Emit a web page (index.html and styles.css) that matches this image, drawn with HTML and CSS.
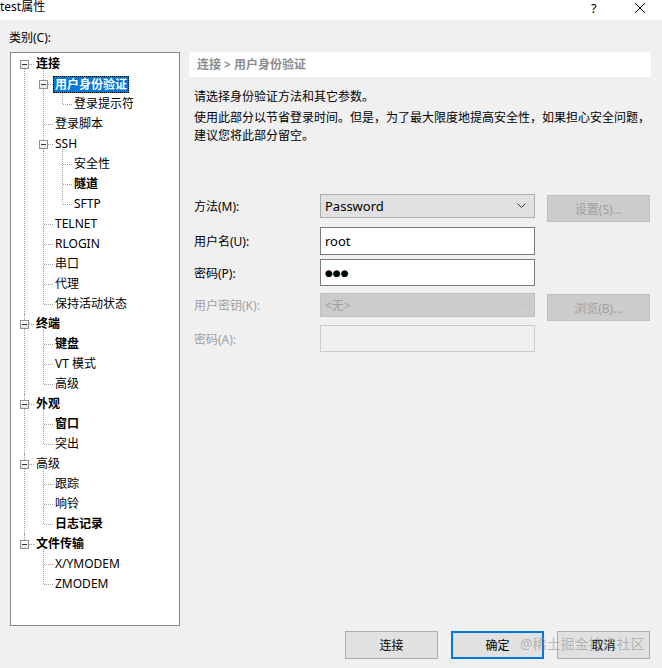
FILE: index.html
```html
<!DOCTYPE html>
<html lang="zh-CN">
<head>
<meta charset="utf-8">
<title>test属性</title>
<link rel="stylesheet" href="styles.css">
</head>
<body>
<div class="window">
  <div class="titlebar">
    <span class="title">test属性</span>
    <span class="tb-help">?</span>
    <span class="tb-close"><svg width="12" height="12" viewBox="0 0 12 12"><path d="M1 1 L11 11 M11 1 L1 11" stroke="#000" stroke-width="1" fill="none"/></svg></span>
  </div>
  <div class="content">
    <div class="cat-label">类别(C):</div>
    <div class="main">
      <div class="tree">
        <ul class="root">
          <li class="open"><div class="row"><i class="exp"></i><span class="lbl b">连接</span></div>
            <ul>
              <li class="open"><div class="row"><i class="exp"></i><span class="lbl b sel">用户身份验证</span></div>
                <ul><li><div class="row"><span class="lbl">登录提示符</span></div></li></ul>
              </li>
              <li><div class="row"><span class="lbl">登录脚本</span></div></li>
              <li class="open"><div class="row"><i class="exp"></i><span class="lbl">SSH</span></div>
                <ul>
                  <li><div class="row"><span class="lbl">安全性</span></div></li>
                  <li><div class="row"><span class="lbl b">隧道</span></div></li>
                  <li><div class="row"><span class="lbl">SFTP</span></div></li>
                </ul>
              </li>
              <li><div class="row"><span class="lbl">TELNET</span></div></li>
              <li><div class="row"><span class="lbl">RLOGIN</span></div></li>
              <li><div class="row"><span class="lbl">串口</span></div></li>
              <li><div class="row"><span class="lbl">代理</span></div></li>
              <li><div class="row"><span class="lbl">保持活动状态</span></div></li>
            </ul>
          </li>
          <li class="open"><div class="row"><i class="exp"></i><span class="lbl b">终端</span></div>
            <ul>
              <li><div class="row"><span class="lbl b">键盘</span></div></li>
              <li><div class="row"><span class="lbl">VT 模式</span></div></li>
              <li><div class="row"><span class="lbl">高级</span></div></li>
            </ul>
          </li>
          <li class="open"><div class="row"><i class="exp"></i><span class="lbl b">外观</span></div>
            <ul>
              <li><div class="row"><span class="lbl b">窗口</span></div></li>
              <li><div class="row"><span class="lbl">突出</span></div></li>
            </ul>
          </li>
          <li class="open"><div class="row"><i class="exp"></i><span class="lbl">高级</span></div>
            <ul>
              <li><div class="row"><span class="lbl">跟踪</span></div></li>
              <li><div class="row"><span class="lbl">响铃</span></div></li>
              <li><div class="row"><span class="lbl b">日志记录</span></div></li>
            </ul>
          </li>
          <li class="open"><div class="row"><i class="exp"></i><span class="lbl b">文件传输</span></div>
            <ul>
              <li><div class="row"><span class="lbl">X/YMODEM</span></div></li>
              <li><div class="row"><span class="lbl">ZMODEM</span></div></li>
            </ul>
          </li>
        </ul>
      </div>
      <div class="panel">
        <div class="crumb">连接 &gt; 用户身份验证</div>
        <p class="desc1">请选择身份验证方法和其它参数。</p>
        <p class="desc2">使用此部分以节省登录时间。但是，为了最大限度地提高安全性，如果担心安全问题，<br>建议您将此部分留空。</p>
        <div class="form">
          <div class="flabel h24">方法(M):</div>
          <div class="select h24"><span>Password</span><svg width="9" height="6" viewBox="0 0 9 6"><path d="M0.5 0.5 L4.5 4.5 L8.5 0.5" stroke="#333" fill="none"/></svg></div>
          <div class="btn disabled">设置(S)...</div>

          <div class="flabel h28">用户名(U):</div>
          <div class="input h28">root</div>
          <div></div>

          <div class="flabel h27">密码(P):</div>
          <div class="input h27"><span class="dots">●●●</span></div>
          <div></div>

          <div class="flabel h24 dis">用户密钥(K):</div>
          <div class="select h24 disabled"><span>&lt;无&gt;</span><svg width="9" height="6" viewBox="0 0 9 6"><path d="M0.5 0.5 L4.5 4.5 L8.5 0.5" stroke="#bdbdbd" fill="none"/></svg></div>
          <div class="btn disabled">浏览(B)...</div>

          <div class="flabel h27 dis">密码(A):</div>
          <div class="input h27 disabled"></div>
          <div></div>
        </div>
      </div>
    </div>
    <div class="footer">
      <div class="btn big">连接</div>
      <div class="btn big focus">确定</div>
      <div class="btn big">取消</div>
      <span class="watermark">@稀土掘金技术社区</span>
    </div>
  </div>
</div>
</body>
</html>
```

FILE: styles.css
```css
* { box-sizing: border-box; }
html, body { margin: 0; padding: 0; }
body {
  width: 662px;
  height: 668px;
  background: #f0f0f0;
  font-family: "Segoe UI", "Noto Sans", "Noto Sans CJK SC", sans-serif;
  font-size: 12px;
  color: #000;
  overflow: hidden;
}
.window { width: 662px; height: 668px; }

.titlebar {
  height: 20px;
  background: #fff;
  position: relative;
}
.title { position: absolute; left: 0; top: -1px; font-size: 12px; line-height: 16px; }
.tb-help { position: absolute; left: 591px; top: 0; font-size: 13px; line-height: 16px; }
.tb-close { position: absolute; left: 634px; top: 2px; width: 12px; height: 12px; }
.tb-close svg { display: block; }

.content { position: relative; }
.cat-label { margin: 10px 0 0 9px; height: 16px; line-height: 16px; }

.main {
  display: flex;
  margin-top: 6px;
  padding-left: 10px;
  gap: 9px;
}

/* tree */
.tree {
  width: 170px;
  height: 574px;
  background: #fff;
  border: 1px solid #828790;
  padding: 1px 0 0 6px;
  overflow: hidden;
}
.tree ul { list-style: none; margin: 0; padding: 0; }
.tree ul ul { padding-left: 19px; }
.tree li { position: relative; }
.tree li::before {
  content: "";
  position: absolute;
  left: 7px;
  top: -5px;
  bottom: 0;
  border-left: 1px dotted #a0a0a0;
}
.tree li:last-child::before { bottom: auto; height: 15px; }
.tree .root > li::before { top: 0; }
.tree .root > li:first-child::before { top: 10px; }
.tree .root > li:last-child::before { top: 0; height: 10px; }
.tree li::after {
  content: "";
  position: absolute;
  left: 8px;
  top: 10px;
  width: 9px;
  border-top: 1px dotted #a0a0a0;
}
.row {
  position: relative;
  height: 20px;
  display: flex;
  align-items: center;
  padding-left: 17px;
  z-index: 1;
}
.exp {
  position: absolute;
  left: 3px;
  top: 6px;
  width: 9px;
  height: 9px;
  border: 1px solid #919191;
  background: linear-gradient(#ffffff, #e4e4e4);
  z-index: 2;
}
.exp::after {
  content: "";
  position: absolute;
  left: 1px;
  top: 3px;
  width: 5px;
  height: 1px;
  background: #333;
}
.lbl {
  padding: 0 2px;
  line-height: 16px;
  height: 16px;
  white-space: nowrap;
  color: #000;
}
.lbl.b { font-weight: bold; }
.lbl.sel {
  background: #0078d7;
  color: #fff;
  outline: 1px dotted #000;
  outline-offset: -1px;
  height: 17px;
  line-height: 17px;
}

/* panel */
.panel { width: 462px; }
.crumb {
  height: 25px;
  line-height: 25px;
  background: #fff;
  padding-left: 8px;
  color: #8c8c8c;
  font-weight: bold;
}
.desc1 { margin: 11px 0 0 5px; line-height: 18px; }
.desc2 { margin: 3px 0 0 5px; line-height: 18px; white-space: nowrap; }

.form {
  margin-top: 49px;
  padding-left: 5px;
  display: grid;
  grid-template-columns: 114px 215px 103px;
  column-gap: 12px;
  grid-template-rows: 33px 32px 34px 32px 27px;
  align-items: start;
}
.flabel { display: flex; align-items: center; }
.flabel.dis { color: #a0a0a0; }
.h24 { height: 24px; }
.h27 { height: 27px; }
.h28 { height: 28px; }
.select {
  background: #e1e1e1;
  border: 1px solid #adadad;
  display: flex;
  align-items: center;
  justify-content: space-between;
  padding: 0 8px 0 4px;
  font-size: 13px;
}
.select.disabled { background: #cccccc; border-color: #bfbfbf; color: #a0a0a0; font-size: 12px; }
.input {
  background: #fff;
  border: 1px solid #7a7a7a;
  display: flex;
  align-items: center;
  padding: 0 4px;
  font-size: 13px;
}
.input.disabled { background: #f0f0f0; border-color: #cccccc; }
.dots { font-size: 9px; letter-spacing: 0; font-family: "DejaVu Sans", sans-serif; }

.btn {
  height: 28px;
  display: flex;
  align-items: center;
  justify-content: center;
  background: #e1e1e1;
  border: 1px solid #adadad;
}
.btn.disabled { background: #cccccc; border-color: #bfbfbf; color: #a0a0a0; margin-top: 1px; height: 27px; }

.footer {
  position: relative;
  display: flex;
  justify-content: flex-end;
  gap: 13px;
  padding-right: 12px;
  margin-top: 5px;
}
.btn.big { width: 93px; height: 28px; }
.btn.focus { border: 2px solid #0078d7; }
.watermark {
  position: absolute;
  left: 520px;
  top: 3px;
  font-size: 14px;
  line-height: 20px;
  color: rgba(140, 140, 140, 0.55);
  white-space: nowrap;
}
```
